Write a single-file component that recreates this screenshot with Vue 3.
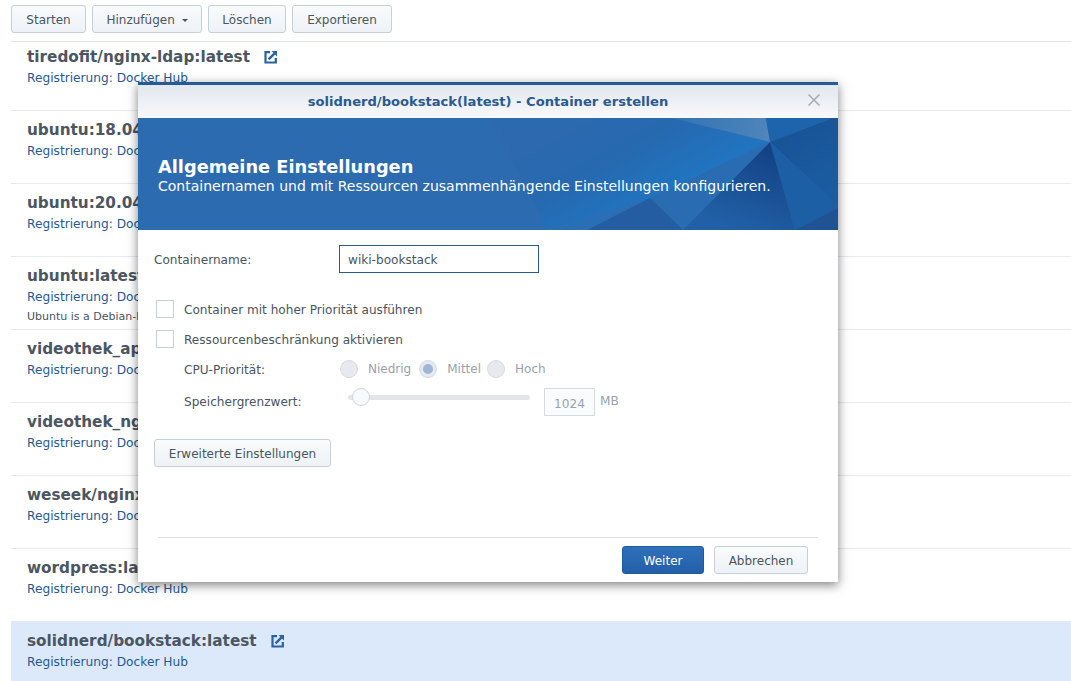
<script setup>
const images = [
  { name: 'tiredofit/nginx-ldap:latest', link: true, cls: 'first' },
  { name: 'ubuntu:18.04' },
  { name: 'ubuntu:20.04' },
  { name: 'ubuntu:latest', desc: 'Ubuntu is a Debian-based' },
  { name: 'videothek_app' },
  { name: 'videothek_nginx' },
  { name: 'weseek/nginx' },
  { name: 'wordpress:latest' },
  { name: 'solidnerd/bookstack:latest', link: true, cls: 'selected' },
]
</script>

<template>
  <div class="page">
    <div class="toolbar">
      <button class="btn">Starten</button>
      <button class="btn">Hinzufügen <span class="caret"></span></button>
      <button class="btn">Löschen</button>
      <button class="btn">Exportieren</button>
    </div>

    <div class="list">
      <div v-for="img in images" :key="img.name" class="row" :class="img.cls">
        <div class="row-title">
          <span>{{ img.name }}</span>
          <svg v-if="img.link" class="ext" width="14" height="14" viewBox="0 0 14 14">
            <path d="M6 2.2H1.5v10.3h10.3V8" fill="none" stroke="#2862a4" stroke-width="2.2" />
            <path d="M4.6 9.4 10.6 3.4" fill="none" stroke="#2862a4" stroke-width="2.4" />
            <path d="M7.6 1H13v5.4z" fill="#2862a4" />
          </svg>
        </div>
        <div class="row-reg">Registrierung: Docker Hub</div>
        <div v-if="img.desc" class="row-desc">{{ img.desc }}</div>
      </div>
    </div>

    <div class="modal">
      <div class="modal-head">
        <span>solidnerd/bookstack(latest) - Container erstellen</span>
        <svg class="close" width="14" height="14" viewBox="0 0 14 14">
          <path d="M1.5 1.5 12.5 12.5M12.5 1.5 1.5 12.5" stroke="#a9acb0" stroke-width="1.6" fill="none" />
        </svg>
      </div>

      <div class="banner">
        <svg class="banner-art" width="700" height="112" viewBox="0 0 700 112">
          <defs>
            <linearGradient id="lit" x1="450" y1="0" x2="500" y2="90" gradientUnits="userSpaceOnUse">
              <stop offset="0" stop-color="#2c69ae" />
              <stop offset="0.45" stop-color="#2669af" />
              <stop offset="1" stop-color="#2074c0" />
            </linearGradient>
            <linearGradient id="glow" x1="534" y1="0" x2="632" y2="24" gradientUnits="userSpaceOnUse">
              <stop offset="0" stop-color="#3472b2" />
              <stop offset="1" stop-color="#4f86bb" />
            </linearGradient>
            <linearGradient id="deep" x1="632" y1="30" x2="600" y2="112" gradientUnits="userSpaceOnUse">
              <stop offset="0" stop-color="#134285" />
              <stop offset="1" stop-color="#2160a6" />
            </linearGradient>
            <linearGradient id="edge" x1="640" y1="0" x2="700" y2="80" gradientUnits="userSpaceOnUse">
              <stop offset="0" stop-color="#175293" />
              <stop offset="1" stop-color="#1b5da3" />
            </linearGradient>
            <linearGradient id="low" x1="430" y1="70" x2="520" y2="112" gradientUnits="userSpaceOnUse">
              <stop offset="0" stop-color="#2a70b6" />
              <stop offset="1" stop-color="#2a6db2" />
            </linearGradient>
          </defs>
          <polygon points="352,0 534,0 632,24 512,80 409,112" fill="url(#lit)" />
          <polygon points="534,0 628,0 632,24" fill="url(#glow)" />
          <polygon points="628,0 695,0 632,24" fill="#1e64ad" />
          <polygon points="695,0 700,0 700,88 632,24" fill="url(#edge)" />
          <polygon points="632,24 700,88 700,90 657,112" fill="#1c5fa4" />
          <polygon points="657,112 700,90 700,112" fill="#1f5393" />
          <polygon points="632,24 657,112 545,112" fill="url(#deep)" />
          <polygon points="632,24 545,112 512,80" fill="#2a6cb1" />
          <polygon points="512,80 449,112 409,112" fill="url(#low)" />
          <polygon points="512,80 545,112 449,112" fill="#255da2" />
        </svg>
        <div class="banner-text">
          <h1>Allgemeine Einstellungen</h1>
          <p>Containernamen und mit Ressourcen zusammenhängende Einstellungen konfigurieren.</p>
        </div>
      </div>

      <div class="form">
        <div class="field name-field">
          <label class="lbl">Containername:</label>
          <div class="name-input">wiki-bookstack</div>
        </div>

        <div class="check first-check"><span class="box"></span><span class="check-text">Container mit hoher Priorität ausführen</span></div>
        <div class="check"><span class="box"></span><span class="check-text">Ressourcenbeschränkung aktivieren</span></div>

        <div class="field cpu">
          <label class="lbl">CPU-Priorität:</label>
          <div class="radios">
            <span class="radio"></span><span class="radio-text r1">Niedrig</span>
            <span class="radio on"></span><span class="radio-text r2">Mittel</span>
            <span class="radio"></span><span class="radio-text">Hoch</span>
          </div>
        </div>

        <div class="field mem">
          <label class="lbl">Speichergrenzwert:</label>
          <div class="slider"><span class="knob"></span></div>
          <div class="mem-value">1024</div>
          <span class="mem-unit">MB</span>
        </div>

        <button class="btn adv">Erweiterte Einstellungen</button>
      </div>

      <div class="foot">
        <button class="btn primary">Weiter</button>
        <button class="btn cancel">Abbrechen</button>
      </div>
    </div>
  </div>
</template>

<style scoped>
.page {
  position: relative;
  width: 1071px;
  height: 681px;
  overflow: hidden;
  background: #fff;
  font-family: "DejaVu Sans", Verdana, sans-serif;
  color: #4a5560;
}

.toolbar {
  height: 42px;
  box-sizing: border-box;
  margin-left: 11px;
  padding-top: 5px;
  display: flex;
  align-items: flex-start;
  gap: 6px;
  border-bottom: 1px solid #dfe4e9;
}

.toolbar .btn {
  padding: 1px 0 0;
}

.toolbar .btn:nth-child(1) {
  width: 75px;
}

.toolbar .btn:nth-child(2) {
  width: 110px;
}

.toolbar .btn:nth-child(3) {
  width: 78px;
}

.toolbar .btn:nth-child(4) {
  width: 100px;
}

.btn {
  height: 28px;
  padding: 0 14px;
  border: 1px solid #c6d0dc;
  border-radius: 3px;
  background: linear-gradient(#f9fbfc, #eef2f6);
  font-family: inherit;
  font-size: 12px;
  color: #4a5560;
}

.caret {
  display: inline-block;
  width: 0;
  height: 0;
  margin-left: 3px;
  vertical-align: 2px;
  border-left: 3px solid transparent;
  border-right: 3px solid transparent;
  border-top: 3px solid #4a5560;
}

.list {
  margin-left: 11px;
}

.row {
  height: 73px;
  box-sizing: border-box;
  padding: 9px 16px 0;
  border-bottom: 1px solid #e6eaef;
}

.row.first {
  height: 69px;
  padding-top: 5px;
}

.row.selected {
  height: 60px;
  background: #dce9fa;
  border-bottom: 0;
}

.row-title {
  display: flex;
  align-items: center;
  height: 20px;
  font-size: 15.25px;
  font-weight: 700;
  color: #4b5662;
  white-space: nowrap;
}

.ext {
  margin-left: 14px;
}

.row-reg {
  margin-top: 4px;
  font-size: 12.2px;
  line-height: 15px;
  color: #255a94;
}

.row-desc {
  margin-top: 5px;
  font-size: 11px;
  line-height: 14px;
  color: #4a5560;
}

.modal {
  position: absolute;
  left: 138px;
  top: 82px;
  width: 700px;
  height: 500px;
  display: flex;
  flex-direction: column;
  background: #fff;
  border-top: 3px solid #255a94;
  box-sizing: border-box;
  box-shadow: 0 3px 10px rgba(0, 0, 0, 0.5);
}

.modal-head {
  position: relative;
  height: 33px;
  display: flex;
  align-items: center;
  justify-content: center;
  background: linear-gradient(#e2e7ef, #f8f9fb);
  font-size: 13.1px;
  font-weight: 700;
  color: #2b5a91;
}

.close {
  position: absolute;
  right: 17px;
  top: 8px;
}

.banner {
  position: relative;
  height: 112px;
  background: #2d6bb1;
  color: #fff;
  overflow: hidden;
}

.banner-art {
  position: absolute;
  left: 0;
  top: 0;
}

.banner-text {
  position: relative;
  padding: 38px 0 0 20px;
}

.banner-text h1 {
  margin: 0;
  font-size: 17.8px;
  line-height: 22px;
  font-weight: 700;
}

.banner-text p {
  margin: 0;
  font-size: 14px;
  line-height: 17px;
}

.form {
  flex: 1;
  padding: 15px 16px 0;
  font-size: 12.1px;
}

.field {
  display: flex;
  align-items: center;
}

.lbl {
  width: 185px;
  flex: none;
}

.name-field .lbl {
  margin-top: 1px;
}

.name-input {
  width: 200px;
  height: 28px;
  box-sizing: border-box;
  border: 1px solid #255a94;
  padding-left: 8px;
  line-height: 28px;
  color: #4a5560;
}

.check {
  display: flex;
  align-items: center;
  height: 18px;
  margin-top: 12px;
  margin-left: 2px;
}

.check-text {
  margin-top: 2px;
}

.first-check {
  margin-top: 27px;
}

.box {
  width: 16px;
  height: 16px;
  margin-right: 10px;
  border: 1px solid #c6d0dc;
}

.cpu {
  height: 18px;
  margin-top: 13px;
  padding-left: 30px;
}

.cpu .lbl {
  width: 156px;
}

.mem .lbl {
  width: 155px;
}

.radios {
  display: flex;
  align-items: center;
  margin-top: -2px;
  font-size: 12px;
  color: #97a2ad;
}

.radio {
  width: 16px;
  height: 16px;
  border: 1px solid #d5dbe2;
  border-radius: 50%;
  background: #e6e9ee;
  margin-right: 10px;
  position: relative;
}

.radio.on::after {
  content: "";
  position: absolute;
  left: 3px;
  top: 3px;
  width: 10px;
  height: 10px;
  border-radius: 50%;
  background: #9db6d6;
}

.r1 {
  margin-right: 8px;
}

.r2 {
  margin-right: 6px;
}

.mem {
  height: 28px;
  margin-top: 9px;
  padding-left: 30px;
}

.slider {
  position: relative;
  width: 182px;
  height: 5px;
  margin: -10px 14px 0 9px;
  border-radius: 3px;
  background: #e2e6ea;
}

.knob {
  position: absolute;
  left: 4px;
  top: -7px;
  width: 18px;
  height: 18px;
  box-sizing: border-box;
  border: 1px solid #cdd6e0;
  border-radius: 50%;
  background: #f6fafd;
}

.mem-value {
  width: 51px;
  height: 28px;
  box-sizing: border-box;
  border: 1px solid #d5dbe2;
  background: #fafbfc;
  padding-top: 2px;
  line-height: 26px;
  text-align: center;
  color: #97a2ad;
}

.mem-unit {
  margin: -2px 0 0 5px;
  color: #97a2ad;
}

.adv {
  display: block;
  margin-top: 23px;
  width: 177px;
  padding: 1px 0 0;
}

.foot {
  flex: none;
  height: 45px;
  margin: 0 20px;
  padding: 8px 10px 0 0;
  box-sizing: border-box;
  border-top: 1px solid #dfe2e5;
  display: flex;
  justify-content: flex-end;
  gap: 10px;
}

.foot .btn {
  padding: 1px 0 0;
}

.primary {
  width: 82px;
  background: linear-gradient(#2f70bb, #225fa8);
  border-color: #1f5a9e;
  color: #fff;
}

.cancel {
  width: 94px;
}
</style>

<style>
body {
  margin: 0;
}
</style>
